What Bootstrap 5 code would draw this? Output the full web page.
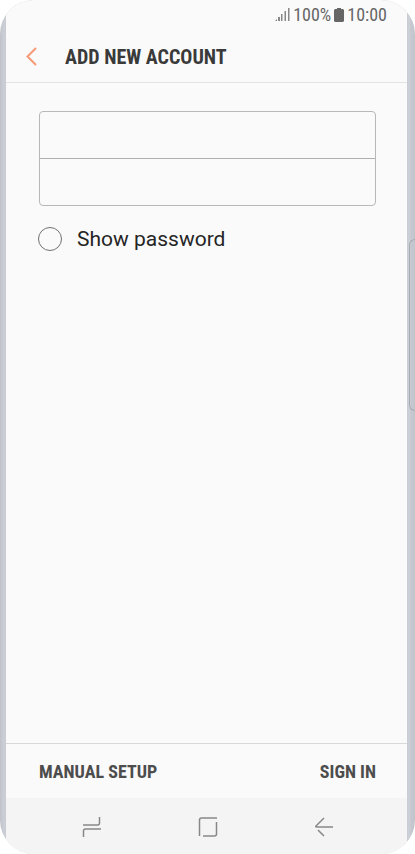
<!DOCTYPE html>
<html lang="en">
<head>
<meta charset="utf-8">
<meta name="viewport" content="width=device-width, initial-scale=1">
<title>Add new account</title>
<link rel="stylesheet" href="https://cdn.jsdelivr.net/npm/bootstrap@5.3.0/dist/css/bootstrap.min.css">
<style>
body { background: #fff; font-family: Roboto, "Liberation Sans", sans-serif; color: #252525; }
.phone { border-radius: 34px; padding: 0 8px 0 6px;
  background: linear-gradient(to right, #c0c2c9, #cdcfd6 4px, #c8cad1 6px, #c8cad1 calc(100% - 8px), #cfd1d8 calc(100% - 6px), #c6c8cf calc(100% - 4px), #c2c4cb); }
.screen { background: #fafafa; }
.edge-panel { right: 0; top: 239px; width: 6px; height: 172px; border: 1px solid #a9abb2; border-right: 0; border-radius: 6px 0 0 6px; }
.condensed { font-family: "Roboto Condensed", Roboto, "Liberation Sans Narrow", sans-serif; }
.status { height: 30px; padding-right: 20px; font-size: 18px; line-height: 30px; color: #666; gap: 3px; }
.title-bar { height: 53px; padding: 1px 0 0 20px; gap: 28px; border-bottom: 1px solid #e2e3e4; }
.title-bar h1 { font-size: 20px; line-height: 24px; color: #3a3a3a; }
.plain { background: none; border: 0; padding: 0; }
.form-area { padding: 28px 31px 0 33px; }
.fields { border: 1px solid #b8b8b8; border-radius: 4px; }
.fields .form-control { height: 47px; background: transparent; border: 0; border-radius: 0; }
.fields .form-control:first-child { height: 46px; }
.fields .form-control + .form-control { border-top: 1px solid #b0b0b0; }
.show-row { margin-top: 19px; gap: 15px; font-size: 21px; line-height: 28px; }
.show-row .form-check-input { width: 24px; height: 24px; margin: 0 0 0 -1px; border: 1px solid #707070; border-radius: 50%; background-color: transparent; }
.actions { height: 55px; padding: 2px 31px 0 33px; border-top: 1px solid #d8d9da; }
.actions button { font-size: 18px; line-height: 24px; color: #4d4d4d; }
.keys { height: 56px; background: #f4f4f4; padding: 2px 0 0 2px; }
.keys button { width: 116px; }
svg { display: block; }
</style>
<script src="https://cdn.jsdelivr.net/npm/bootstrap@5.3.0/dist/js/bootstrap.bundle.min.js"></script>
</head>
<body>
<div class="phone position-relative overflow-hidden min-vh-100 d-flex">
  <div class="screen flex-grow-1 d-flex flex-column">
    <div class="status condensed d-flex justify-content-end align-items-center">
      <svg width="15" height="14" viewBox="0 0 15 14" aria-hidden="true"><path d="M0 13l2-2v2zM3 9h2v4H3zM6 6h1.500v7H6zM9.500 3H11v10H9.500zM13 0h1.500v13H13z" fill="#888"/></svg>
      <span>100%</span>
      <svg width="10" height="14" viewBox="0 0 10 14" aria-hidden="true"><path d="M3 0h4v1h2l1 1v11l-1 1H1l-1-1V2l1-1h2z" fill="#666"/></svg>
      <span>10:00</span>
    </div>
    <header class="title-bar d-flex align-items-center">
      <button class="plain" type="button" aria-label="Back"><svg width="11" height="20" viewBox="0 0 11 20"><path d="M10 1L1.500 9.500L10 18" fill="none" stroke="#f69a77" stroke-width="2"/></svg></button>
      <h1 class="condensed fw-bold mb-0">ADD NEW ACCOUNT</h1>
    </header>
    <main class="form-area flex-grow-1">
      <div class="fields">
        <input class="form-control" type="email" aria-label="Email address">
        <input class="form-control" type="password" aria-label="Password">
      </div>
      <div class="show-row d-flex align-items-center">
        <input class="form-check-input flex-shrink-0" type="checkbox" id="show">
        <label for="show">Show password</label>
      </div>
    </main>
    <div class="actions condensed d-flex justify-content-between align-items-center">
      <button class="plain fw-bold" type="button">MANUAL SETUP</button>
      <button class="plain fw-bold" type="button">SIGN IN</button>
    </div>
    <nav class="keys d-flex justify-content-center" aria-label="System navigation">
      <button class="plain d-flex align-items-center justify-content-center" type="button" aria-label="Recent apps"><svg width="20" height="20" viewBox="0 0 20 20" fill="none" stroke="#888" stroke-width="1.500"><path d="M1 8h14.500q2 0 2-2V0M1.500 20v-6q0-2 2-2H19"/></svg></button>
      <button class="plain d-flex align-items-center justify-content-center" type="button" aria-label="Home"><svg width="20" height="20" viewBox="0 0 20 20" fill="none" stroke="#888" stroke-width="1.500"><path d="M1.500 19V3q0-2 2-2H19M18.500 5v12q0 2-2 2H5"/></svg></button>
      <button class="plain d-flex align-items-center justify-content-center" type="button" aria-label="Go back"><svg width="20" height="20" viewBox="0 0 20 20" fill="none" stroke="#888" stroke-width="1.500"><path d="M10 1L2 9q-1 1 1 1h16M4 13l6 6"/></svg></button>
    </nav>
  </div>
  <div class="edge-panel position-absolute"></div>
</div>
</body>
</html>
